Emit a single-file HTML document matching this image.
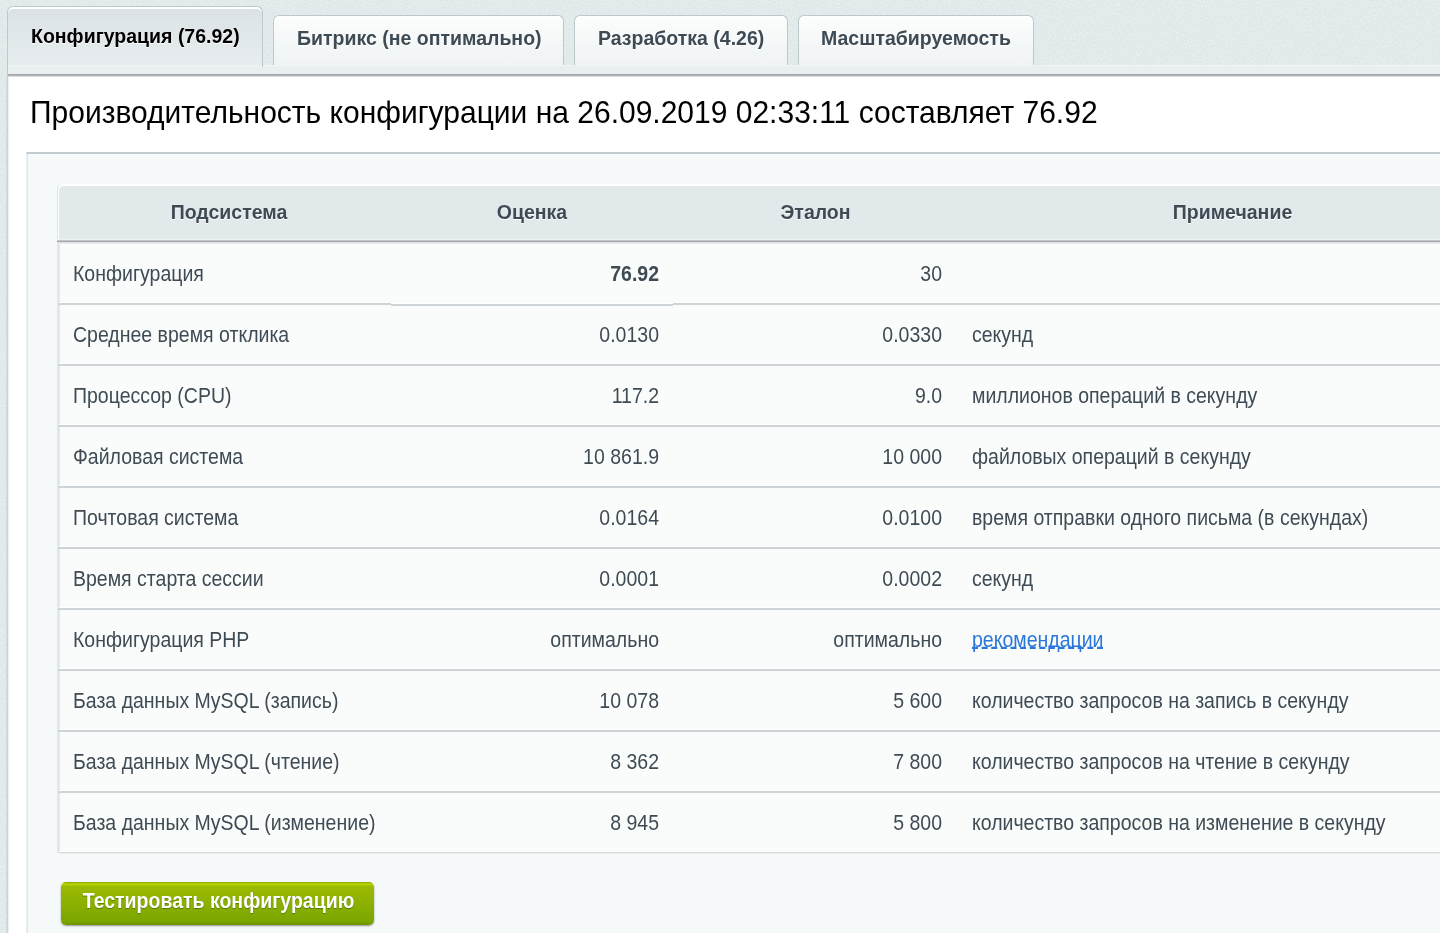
<!DOCTYPE html>
<html lang="ru">
<head>
<meta charset="utf-8">
<title>Монитор производительности</title>
<style>
html,body{margin:0;padding:0;}
body{width:1440px;height:933px;overflow:hidden;position:relative;background:#dfe8e9;font-family:"Liberation Sans",sans-serif;font-size:19.5px;color:#3f4b54;}
.t{display:inline-block;transform:scaleY(1.1);transform-origin:0 81%;white-space:nowrap;}
.tabs{position:absolute;left:0;top:0;width:1440px;height:66px;z-index:2;}
.tab{position:absolute;top:15px;height:50px;line-height:44px;box-sizing:border-box;padding:0 23px;border:1px solid #bec7cb;border-bottom:none;border-radius:6px 6px 0 0;background:linear-gradient(#fcfdfd,#eff3f4);font-weight:bold;font-size:19.5px;color:#3f4b54;text-shadow:0 1px 0 #fff;white-space:nowrap;box-shadow:inset 0 1px 0 #fff;}
.tab.active{top:6px;height:61px;line-height:60px;background:linear-gradient(#dbe2e5,#e7edef 58px,#f2f5f6 59px,#e9eff0 60px);color:#000;border-color:#bfc8cc;box-shadow:inset 0 2px 0 #fff;}
.band{position:absolute;left:7px;top:65px;width:1433px;height:12px;box-sizing:border-box;border-left:1px solid #bfc8cc;background:linear-gradient(#f1f5f6 0,#f1f5f6 1px,#e9eff0 1px,#eaf0f1 9px,#a2a9ac 9px,#a2a9ac 10px,#acb3b6 10px,#acb3b6 11px,#dde1e3 11px);}
.content{position:absolute;left:6px;top:77px;width:1434px;height:856px;background:#fff;border-left:1px solid #d4dcde;box-sizing:border-box;box-shadow:inset 1px 0 0 #ccd4d7,inset 2px 0 0 #eef1f2;}
h1{position:absolute;left:30px;top:94px;margin:0;font-size:30px;font-weight:normal;color:#000;line-height:38px;white-space:nowrap;}
.inner{position:absolute;left:26px;top:152px;width:1414px;height:781px;background:#f5f9f9;border-top:2px solid #c3ccd1;border-left:1px solid #e8eef2;box-sizing:border-box;box-shadow:inset 1px 0 0 #dde6ec,inset 0 1px 0 #f9fbfb;}
.tbl{position:absolute;left:57px;top:184px;width:1450px;height:670px;}
.head{position:absolute;left:0;top:0;width:1451px;height:56px;background:#e1e9eb;border-radius:5px 0 0 0;box-shadow:inset 1px 2px 0 #fff;border-left:1px solid #dde4e6;box-sizing:border-box;}
.hline{position:absolute;left:0;top:55px;width:1451px;height:5px;background:linear-gradient(#edf1f2 0,#edf1f2 20%,#c2c6c8 20%,#c2c6c8 40%,#a5a9ab 40%,#a5a9ab 60%,#dfe2e3 60%,#dfe2e3 80%,#e9ecec 80%);}
.body{position:absolute;left:0;top:60px;width:1451px;height:609px;background:#fafcfc;border-left:2px solid #e2e8ea;box-sizing:border-box;box-shadow:inset 1px 0 0 #e2e8ea;}
.th{position:absolute;top:1px;height:57px;line-height:57px;text-align:center;font-weight:bold;text-shadow:0 1px 0 #fff;}
.row{position:absolute;left:2px;width:1450px;height:61px;border-bottom:2px solid #ccd4d7;box-sizing:border-box;box-shadow:inset 0 -1px 0 #fff;}
.jog{position:absolute;left:332px;top:58px;width:282px;height:4px;background:linear-gradient(#fafcfc 0,#fafcfc 1px,#fff 1px,#fff 2px,#ccd4d7 2px);}
.c{position:absolute;top:2px;height:59px;line-height:59px;white-space:nowrap;}
.c1{left:14px;}
.c2{left:332px;width:268px;text-align:right;}
.c3{left:616px;width:267px;text-align:right;}
.c4{left:913px;}
.lnk{color:#2b76d9;text-decoration:underline dashed #2b76d9;text-decoration-thickness:1.5px;text-underline-offset:0.3px;text-decoration-skip-ink:none;}
.btn{position:absolute;left:61px;top:882px;width:313px;height:43px;box-sizing:border-box;border-radius:5px;background:linear-gradient(#8eb000 0,#94b600 1px,#c3da00 2px,#b2cd00 3px,#9bbb00 4px,#7ba500 40px,#709600 42px,#6a8f00 43px);color:#fff;font-weight:bold;font-size:19.5px;text-align:center;line-height:41px;padding-left:2px;text-shadow:0 1px 1px #5a7a00;box-shadow:0 1px 2px rgba(0,0,0,.4);}
h1 .t{transform:scaleY(1.07);}
.row.last{border-bottom:1px solid #d3dadc;height:60px;box-shadow:inset 0 -1px 0 #fff,0 1px 0 #e9eeef;}
.row::before{content:'';position:absolute;left:-1px;bottom:-2px;width:1px;height:2px;background:#d3dadd;}
.row.last::before{bottom:-1px;height:1px;background:#dae0e2;}
.noise{position:absolute;left:0;top:0;}
.th .t{transform:scaleY(1.06);}
.tab .t{transform:scaleY(1.06);}
</style>
</head>
<body>
<svg class="noise" width="1440" height="933" viewBox="0 0 1440 933" aria-hidden="true"><filter id="nz" x="0" y="0" width="100%" height="100%"><feTurbulence type="fractalNoise" baseFrequency="0.55" numOctaves="2" seed="7" result="t"/><feColorMatrix in="t" type="matrix" values="0 0 0 0 1  0 0 0 0 1  0 0 0 0 1  1.6 0 0 0 -0.62"/></filter><rect x="0" y="0" width="1440" height="78" filter="url(#nz)" opacity="0.5"/><rect x="0" y="78" width="8" height="855" filter="url(#nz)" opacity="0.5"/></svg>
<div class="tabs">
  <div class="tab active" style="left:7px;width:256px"><span class="t">Конфигурация (76.92)</span></div>
  <div class="tab" style="left:273px;width:291px"><span class="t">Битрикс (не оптимально)</span></div>
  <div class="tab" style="left:574px;width:214px"><span class="t">Разработка (4.26)</span></div>
  <div class="tab" style="left:798px;width:236px;padding-left:22px"><span class="t">Масштабируемость</span></div>
</div>
<div class="band"></div>
<div class="content"></div>
<h1><span class="t">Производительность конфигурации на 26.09.2019 02:33:11 составляет 76.92</span></h1>
<div class="inner"></div>
<div class="tbl">
  <div class="body"></div>
  <div class="head">
    <div class="th" style="left:0;width:342px"><span class="t">Подсистема</span></div>
    <div class="th" style="left:332px;width:284px"><span class="t">Оценка</span></div>
    <div class="th" style="left:616px;width:283px"><span class="t">Эталон</span></div>
    <div class="th" style="left:899px;width:551px"><span class="t">Примечание</span></div>
  </div>
  <div class="hline"></div>
  <div class="row" style="top:60px"><div class="c c1"><span class="t">Конфигурация</span></div><div class="c c2"><span class="t"><b>76.92</b></span></div><div class="c c3"><span class="t">30</span></div><div class="c c4"><span class="t"></span></div><div class="jog"></div></div>
  <div class="row" style="top:121px"><div class="c c1"><span class="t">Среднее время отклика</span></div><div class="c c2"><span class="t">0.0130</span></div><div class="c c3"><span class="t">0.0330</span></div><div class="c c4"><span class="t">секунд</span></div></div>
  <div class="row" style="top:182px"><div class="c c1"><span class="t">Процессор (CPU)</span></div><div class="c c2"><span class="t">117.2</span></div><div class="c c3"><span class="t">9.0</span></div><div class="c c4"><span class="t">миллионов операций в секунду</span></div></div>
  <div class="row" style="top:243px"><div class="c c1"><span class="t">Файловая система</span></div><div class="c c2"><span class="t">10 861.9</span></div><div class="c c3"><span class="t">10 000</span></div><div class="c c4"><span class="t">файловых операций в секунду</span></div></div>
  <div class="row" style="top:304px"><div class="c c1"><span class="t">Почтовая система</span></div><div class="c c2"><span class="t">0.0164</span></div><div class="c c3"><span class="t">0.0100</span></div><div class="c c4"><span class="t">время отправки одного письма (в секундах)</span></div></div>
  <div class="row" style="top:365px"><div class="c c1"><span class="t">Время старта сессии</span></div><div class="c c2"><span class="t">0.0001</span></div><div class="c c3"><span class="t">0.0002</span></div><div class="c c4"><span class="t">секунд</span></div></div>
  <div class="row" style="top:426px"><div class="c c1"><span class="t">Конфигурация PHP</span></div><div class="c c2"><span class="t">оптимально</span></div><div class="c c3"><span class="t">оптимально</span></div><div class="c c4"><span class="t"><a class="lnk">рекомендации</a></span></div></div>
  <div class="row" style="top:487px"><div class="c c1"><span class="t">База данных MySQL (запись)</span></div><div class="c c2"><span class="t">10 078</span></div><div class="c c3"><span class="t">5 600</span></div><div class="c c4"><span class="t">количество запросов на запись в секунду</span></div></div>
  <div class="row" style="top:548px"><div class="c c1"><span class="t">База данных MySQL (чтение)</span></div><div class="c c2"><span class="t">8 362</span></div><div class="c c3"><span class="t">7 800</span></div><div class="c c4"><span class="t">количество запросов на чтение в секунду</span></div></div>
  <div class="row last" style="top:609px"><div class="c c1"><span class="t">База данных MySQL (изменение)</span></div><div class="c c2"><span class="t">8 945</span></div><div class="c c3"><span class="t">5 800</span></div><div class="c c4"><span class="t">количество запросов на изменение в секунду</span></div></div>
</div>
<div class="btn"><span class="t">Тестировать конфигурацию</span></div>
</body>
</html>
